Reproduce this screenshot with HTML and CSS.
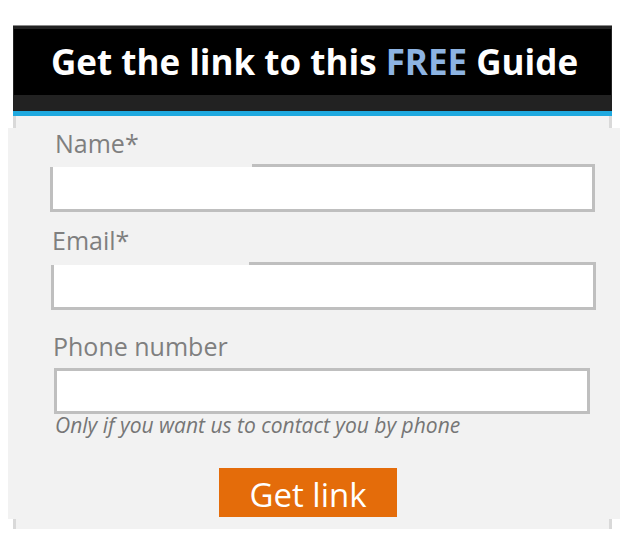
FILE: index.html
```html
<!DOCTYPE html>
<html>
<head>
<meta charset="utf-8">
<link rel="stylesheet" href="styles.css">
</head>
<body>
<div class="card">
  <div class="card-head">
    <div class="title-box">
      <h1 class="title">Get the link to this <span class="free">FREE</span> Guide</h1>
    </div>
  </div>
  <div class="card-line"></div>
  <div class="card-body">
    <form class="panel">
      <label class="label label-name">Name*</label>
      <div class="input input-name"></div>
      <label class="label label-email">Email*</label>
      <div class="input input-email"></div>
      <label class="label label-phone">Phone number</label>
      <div class="input input-phone"></div>
      <p class="hint">Only if you want us to contact you by phone</p>
      <div class="btn-row"><button type="button" class="btn">Get link</button></div>
    </form>
  </div>
</div>
</body>
</html>
```

FILE: styles.css
```css
html, body {
  margin: 0;
  padding: 0;
  background: #ffffff;
}

body {
  font-family: "Open Sans", "Noto Sans", "DejaVu Sans", sans-serif;
}

.card {
  margin: 25px 0 0 13px;
  width: 599px;
}

.card-head {
  background: #222222;
  border-top: 1px solid #8a8a8a;
  padding: 3px 1px 16px 1px;
}

.title-box {
  background: #000000;
  height: 66px;
  display: flex;
  align-items: center;
  justify-content: center;
}

.title {
  margin: 0;
  color: #ffffff;
  font-weight: 700;
  font-size: 35px;
  line-height: 40px;
  padding-left: 4px;
}

.free {
  color: #8db3e2;
}

.card-line {
  height: 5px;
  background: #1fa9df;
}

.card-body {
  background: #f2f2f2;
  border-left: 3px solid #d9d9d9;
  border-right: 3px solid #d9d9d9;
  padding: 12px 0 10px 0;
}

.panel {
  display: flex;
  flex-direction: column;
  align-items: flex-start;
  background: #f2f2f2;
  margin: 0 -11px 0 -8px;
  padding: 0 0 2px 0;
}

.label {
  display: block;
  position: relative;
  box-sizing: border-box;
  background: #f2f2f2;
  color: #7f7f7f;
  font-size: 25px;
  line-height: 30px;
}

.label-name {
  margin-left: 42px;
  width: 202px;
  height: 39px;
  margin-bottom: -3px;
  padding-left: 5px;
}

.label-email {
  margin-top: 13px;
  margin-left: 43px;
  width: 198px;
  height: 40px;
  margin-bottom: -3px;
  padding-left: 1px;
}

.label-phone {
  margin-top: 21px;
  margin-left: 44px;
  height: 37px;
  padding-left: 1px;
  background: transparent;
}

.input {
  box-sizing: border-box;
  background: #ffffff;
  border: 3px solid #bfbfbf;
  height: 48px;
}

.input-name {
  margin-left: 42px;
  width: 545px;
}

.input-email {
  margin-left: 43px;
  width: 545px;
}

.input-phone {
  margin-left: 46px;
  width: 536px;
  height: 46px;
}

.hint {
  margin: 0 0 0 47px;
  font-style: italic;
  font-size: 21px;
  line-height: 22px;
  color: #767676;
}

.btn-row {
  margin-top: 32px;
  margin-left: 211px;
}

.btn {
  display: block;
  width: 178px;
  height: 49px;
  border: 0;
  padding: 0;
  background: #e46c0a;
  color: #ffffff;
  font-family: "Open Sans", "Noto Sans", "DejaVu Sans", sans-serif;
  font-size: 33px;
  line-height: 45px;
  padding-top: 4px;
}
```
